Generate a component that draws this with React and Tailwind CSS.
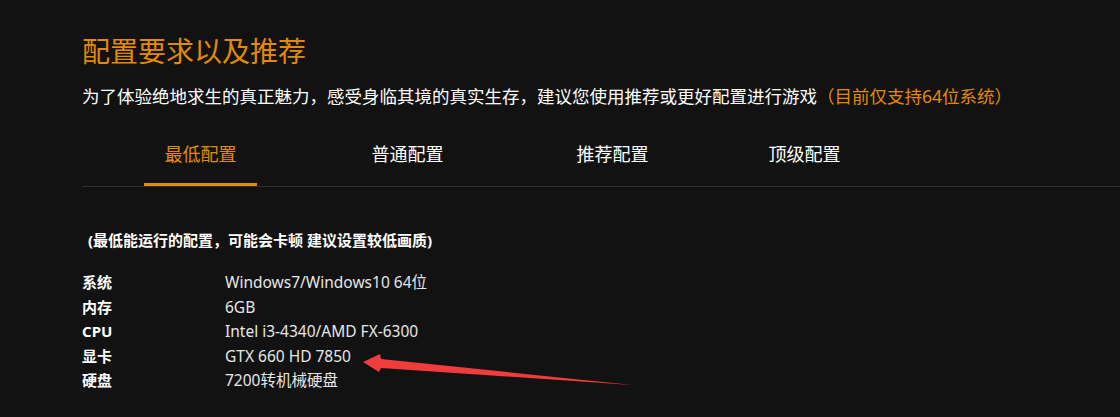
import React, { useState } from "react";

const tabs = [
  { name: "最低配置", ml: "ml-[62px]" },
  { name: "普通配置", ml: "ml-[94px]" },
  { name: "推荐配置", ml: "ml-[92px]" },
  { name: "顶级配置", ml: "ml-[79px]" },
];

const specs = [
  ["系统", "Windows7/Windows10 64位"],
  ["内存", "6GB"],
  ["CPU", "Intel i3-4340/AMD FX-6300"],
  ["显卡", "GTX 660 HD 7850"],
  ["硬盘", "7200转机械硬盘"],
];

const App = () => {
  const [active, setActive] = useState(0);

  return (
    <div
      className="relative h-[417px] w-full overflow-hidden bg-[#121212] pl-[82px] pt-[31px] text-white"
      style={{ fontFamily: '"Noto Sans", "Noto Sans CJK SC", sans-serif' }}
    >
      {/* Header */}
      <h1 className="text-[28px] leading-[40px] text-[#e38a05]">配置要求以及推荐</h1>
      <p className="mt-[12px] text-[17.5px] leading-[26px] text-white">
        为了体验绝地求生的真正魅力，感受身临其境的真实生存，建议您使用推荐或更好配置进行游戏
        <span className="text-[#e38a05]">（目前仅支持64位系统）</span>
      </p>

      {/* Tabs */}
      <div className="mt-[32px] flex border-b border-[#2e2e2e]">
        {tabs.map((tab, i) => (
          <button
            key={tab.name}
            onClick={() => setActive(i)}
            className={`${tab.ml} w-[113px] border-b-[3px] pb-[16px] text-center text-[18px] leading-[26px] ${
              active === i
                ? "border-[#e38a05] text-[#e38a05]"
                : "border-transparent text-white"
            }`}
          >
            {tab.name}
          </button>
        ))}
      </div>

      {/* Specs */}
      <p className="ml-[6px] mt-[42px] text-[15px] font-bold leading-[22px]">
        (最低能运行的配置，可能会卡顿 建议设置较低画质)
      </p>
      <div className="mt-[19px]">
        {specs.map(([label, value]) => (
          <div key={label} className="flex items-center leading-[24.5px]">
            <span className="w-[143px] text-[15px] font-bold text-white">{label}</span>
            <span className="text-[15.5px] text-[#e6e6e6]">{value}</span>
          </div>
        ))}
      </div>

      {/* Annotation arrow */}
      <svg
        className="pointer-events-none absolute left-0 top-0"
        width="1120"
        height="417"
        viewBox="0 0 1120 417"
      >
        <polygon
          points="363,362 380,354 381,359 632,385 381,368 379,372"
          fill="#f03c3c"
        />
      </svg>
    </div>
  );
};

export default App;
